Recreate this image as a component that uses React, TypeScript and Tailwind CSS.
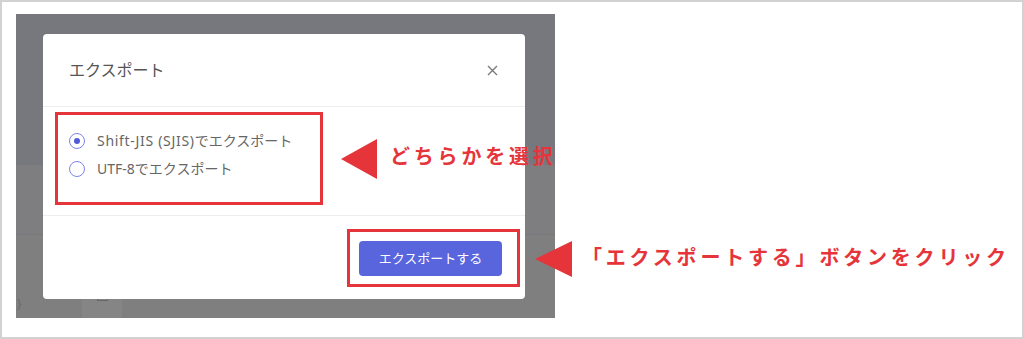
import React from "react";

const jp = { fontFamily: '"Noto Sans", "Noto Sans CJK JP", sans-serif' };

function Radio({ checked }: { checked?: boolean }) {
  return (
    <span className="w-[16px] h-[16px] rounded-full border border-[#7d85ea] flex items-center justify-center bg-white shrink-0">
      {checked && <span className="w-[6px] h-[6px] rounded-full bg-[#4f5bd8]" />}
    </span>
  );
}

function LeftTriangle({ w, h }: { w: number; h: number }) {
  return (
    <svg width={w} height={h} viewBox={`0 0 ${w} ${h}`}>
      <polygon points={`0,${h / 2} ${w},0 ${w},${h}`} fill="#e5353a" />
    </svg>
  );
}

export default function App() {
  return (
    <div
      className="relative w-[1024px] h-[339px] bg-white border-2 border-[#d2d2d2] box-border pl-[14px] pt-[12px] overflow-hidden"
      style={jp}
    >
      {/* dimmed page */}
      <div className="relative w-[539px] h-[304px] bg-[#7c7c7f]">
        <div className="absolute inset-0 flex flex-col">
          <div className="h-[151px] bg-[#77787d]" />
          <div className="h-[70px] bg-[#7e7e80] border-b border-[#78787a]" />
          <div className="flex-1 bg-[#7f7f80] flex items-end">
            <div className="w-[20px] h-[28px] flex items-center text-[#6a6a6a] text-[12px] leading-none pl-[1px]">
              {"}"}
            </div>
            <div className="ml-[46px] w-[40px] h-[28px] bg-[#858586] flex justify-center pt-[2px]">
              <div className="w-[11px] h-[9px] border border-[#666] rounded-[1px] border-t-2" />
            </div>
          </div>
        </div>

        {/* dialog */}
        <div className="absolute left-[27px] top-[20px] w-[482px] h-[265px] bg-white rounded-[4px] flex flex-col">
          <div className="h-[73px] flex items-center justify-between pl-[26px] pr-[27px] border-b border-[#ededed] shrink-0">
            <span className="text-[16px] text-[#555] leading-none">エクスポート</span>
            <svg width="11" height="11" viewBox="0 0 11 11">
              <path d="M1 1 L10 10 M10 1 L1 10" stroke="#7a7a7a" strokeWidth="1.4" />
            </svg>
          </div>
          <div className="h-[109px] pl-[12px] pt-[5px] border-b border-[#ededed] shrink-0">
            <div className="w-[268px] h-[93px] border-[3px] border-[#e5353a] pl-[11px] pt-[12px] flex flex-col">
              <div className="h-[28px] flex items-center gap-[12px]">
                <Radio checked />
                <span className="text-[14px] text-[#666] leading-none whitespace-nowrap">
                  <span className="tracking-[0.7px]">Shift-JIS (SJIS)</span>でエクスポート
                </span>
              </div>
              <div className="h-[28px] flex items-center gap-[12px]">
                <Radio />
                <span className="text-[14px] text-[#666] leading-none whitespace-nowrap">UTF-8でエクスポート</span>
              </div>
            </div>
          </div>
          <div className="flex-1 flex justify-end items-start pt-[13px] pr-[5px]">
            <div className="w-[173px] h-[58px] border-[3px] border-[#e5353a] pl-[9px] pt-[9px]">
              <div className="w-[143px] h-[35px] rounded-[4px] bg-[#5865dd] flex items-center justify-center text-white text-[13px] leading-none">
                エクスポートする
              </div>
            </div>
          </div>
        </div>
      </div>

      {/* annotations */}
      <div className="absolute left-[339px] top-[137px]">
        <LeftTriangle w={36} h={40} />
      </div>
      <div className="absolute left-[388px] top-[143px] text-[20px] font-bold text-[#e5353a] leading-[24px] tracking-[3.8px] whitespace-nowrap">
        どちらかを選択
      </div>
      <div className="absolute left-[533px] top-[239px]">
        <LeftTriangle w={37} h={36} />
      </div>
      <div className="absolute left-[580px] top-[244px] text-[20px] font-bold text-[#e5353a] leading-[24px] tracking-[3.8px] whitespace-nowrap">
        「エクスポートする」ボタンをクリック
      </div>
    </div>
  );
}
